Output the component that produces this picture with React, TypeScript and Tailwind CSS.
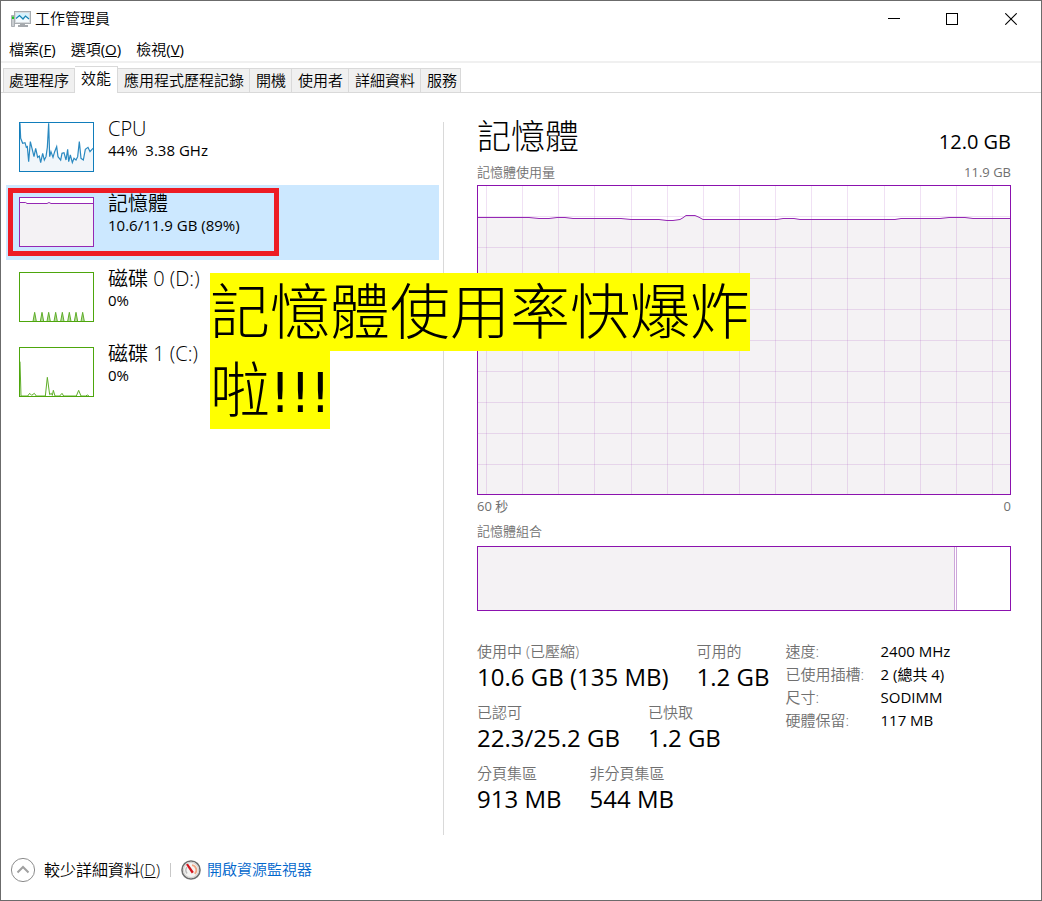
import type { ReactNode } from "react";

const tabs = ["處理程序", "效能", "應用程式歷程記錄", "開機", "使用者", "詳細資料", "服務"];
const activeTab = "效能";

const menus = [
  { label: "檔案", accessKey: "F" },
  { label: "選項", accessKey: "O" },
  { label: "檢視", accessKey: "V" },
];

const columns = [9, 45, 81, 117, 154, 190, 226, 262, 298, 334, 370, 407, 443, 479, 515];
const rows = [31, 62, 93, 124, 155, 186, 217, 248, 279];

const usageCurve =
  "M0 32.5H52L62 33.5H72L80 32.5H88L96 33.5H144L154 34.5H182L190 35.5H196L203 34.5Q206 33 209 30.5H218Q222 32 226 34.5H300L306 33.5H317L323 34.5H418L424 33.5H463L472 32.5H488L496 33.5H534";

const stats = [
  [
    { label: "使用中 (已壓縮)", value: "10.6 GB (135 MB)" },
    { label: "可用的", value: "1.2 GB" },
  ],
  [
    { label: "已認可", value: "22.3/25.2 GB" },
    { label: "已快取", value: "1.2 GB" },
  ],
  [
    { label: "分頁集區", value: "913 MB" },
    { label: "非分頁集區", value: "544 MB" },
  ],
];

const details = [
  ["速度:", "2400 MHz"],
  ["已使用插槽:", "2 (總共 4)"],
  ["尺寸:", "SODIMM"],
  ["硬體保留:", "117 MB"],
];

function MonitorIcon() {
  return (
    <svg width="20" height="18" viewBox="0 0 20 18" aria-hidden="true">
      <path d="M0.5 5.5h3v11h-3z" fill="#c9cdd0" stroke="#9aa0a4" strokeWidth="0.8" />
      <path d="M1 6.5h2v2.5h-2z" fill="#22c522" />
      <path d="M9 13h5v2h3v2H7v-2h2z" fill="#a5a9ad" />
      <rect x="3.5" y="1.5" width="16" height="12" fill="#d9dcdf" stroke="#a7adb1" />
      <rect x="5" y="3" width="13" height="9" fill="#d6f2fc" />
      <path d="M5 8.5L8.5 5.5L12 9L14.5 6L18 9V12H5z" fill="#f4fbfe" />
      <path d="M5 8.5L8.5 5.5L12 9L14.5 6L18 9" fill="none" stroke="#1684b4" strokeWidth="1.2" />
    </svg>
  );
}

function GaugeIcon() {
  return (
    <svg width="20" height="20" viewBox="0 0 20 20" aria-hidden="true">
      <circle cx="10" cy="10" r="9" fill="#f5f4f2" stroke="#6e6e6e" strokeWidth="1.6" />
      <circle cx="10" cy="10" r="7.6" fill="none" stroke="#d4d2d0" strokeWidth="1.2" />
      <path d="M6 13.5A5.2 5.2 0 0 1 6 7.2" fill="none" stroke="#b9b9b9" strokeWidth="1.4" />
      <path d="M11 5.2A5 5 0 0 1 13.8 13.8" fill="none" stroke="#f0a684" strokeWidth="1.8" />
      <path d="M5 4.6L7 3.8L12.8 12L10.8 13.4z" fill="#d4141c" />
    </svg>
  );
}

function Thumbnail({ color, children }: { color: string; children: ReactNode }) {
  return (
    <svg className="h-[50px] w-[75px] shrink-0" viewBox="0 0 225 150" aria-hidden="true">
      <rect width="225" height="150" fill="#fff" />
      {children}
      <rect x="1.5" y="1.5" width="222" height="147" fill="none" stroke={color} strokeWidth="3" />
    </svg>
  );
}

const cpuLine =
  "3,4 5,49 11,64 18,62 22,76 25,74 29,119 34,59 39,79 45,104 50,79 56,106 61,102 65,122 71,94 76,114 81,104 85,76 89,4 92,104 96,89 102,106 107,89 113,74 117,104 125,114 129,94 135,92 141,114 146,82 149,119 154,99 160,122 165,109 171,114 176,104 181,59 186,109 193,114 199,82 207,76 213,89 219,82 223,79";

const diskPeaks = [47, 69, 89, 110, 130, 151, 171, 191];

function CpuThumb() {
  return (
    <Thumbnail color="#117dbb">
      <polygon points={`3,148 ${cpuLine} 223,148`} fill="#f1f6fa" />
      <polyline points={cpuLine} fill="none" stroke="#2a89c0" strokeWidth="3.6" />
    </Thumbnail>
  );
}

function MemoryThumb() {
  return (
    <Thumbnail color="#9528b4">
      <path d="M0 16.5H20L24 19.5H84L90 16.5L96 19.5H225V150H0z" fill="#f4f2f4" />
      <path d="M0 16.5H20L24 19.5H84L90 16.5L96 19.5H225" fill="none" stroke="#9528b4" strokeWidth="3" />
    </Thumbnail>
  );
}

function DiskDThumb() {
  return (
    <Thumbnail color="#4da60c">
      {diskPeaks.map((x) => (
        <path key={x} d={`M${x - 5} 148L${x} 121L${x + 5} 148`} fill="#b5d99c" stroke="#5fae29" strokeWidth="3" />
      ))}
    </Thumbnail>
  );
}

function DiskCThumb() {
  return (
    <Thumbnail color="#4da60c">
      <path
        d="M3 44L6 147H26L32 139L38 145L46 139L52 147H79L85 91L92 143L97 139L100 145L103 130L108 147H122L129 139L134 147H172L179 130L186 147H200L205 144L210 147"
        fill="none"
        stroke="#5fae29"
        strokeWidth="3"
      />
    </Thumbnail>
  );
}

const resources = [
  { name: "CPU", detail: "44%  3.38 GHz", thumb: <CpuThumb />, selected: false },
  { name: "記憶體", detail: "10.6/11.9 GB (89%)", thumb: <MemoryThumb />, selected: true },
  { name: "磁碟 0 (D:)", detail: "0%", thumb: <DiskDThumb />, selected: false },
  { name: "磁碟 1 (C:)", detail: "0%", thumb: <DiskCThumb />, selected: false },
];

function TitleBar() {
  return (
    <header className="flex h-9 items-center justify-between">
      <div className="flex items-center gap-1 pl-[10px]">
        <MonitorIcon />
        <h1 className="pb-[2px] text-[15px] font-[350]">工作管理員</h1>
      </div>
      <div className="flex">
        <button type="button" aria-label="最小化" className="flex h-9 w-[58px] items-center justify-center">
          <svg width="12" height="12" viewBox="0 0 12 12">
            <path d="M0 5.5H12" stroke="#000" />
          </svg>
        </button>
        <button type="button" aria-label="最大化" className="flex h-9 w-[58px] items-center justify-center">
          <svg width="12" height="12" viewBox="0 0 12 12">
            <rect x="0.5" y="0.5" width="11" height="11" fill="none" stroke="#000" />
          </svg>
        </button>
        <button type="button" aria-label="關閉" className="flex h-9 w-[60px] items-center justify-center">
          <svg width="12" height="12" viewBox="0 0 12 12">
            <path d="M0.3 0.3L11.7 11.7M11.7 0.3L0.3 11.7" stroke="#000" strokeWidth="1.1" />
          </svg>
        </button>
      </div>
    </header>
  );
}

function UsageChart() {
  return (
    <svg
      className="block h-[310px] w-full"
      viewBox="0 0 534 310"
      preserveAspectRatio="none"
      role="img"
      aria-label="記憶體使用量"
    >
      <rect width="534" height="310" fill="#fff" />
      <path d={`${usageCurve}V310H0z`} fill="#f4f2f4" />
      <g fill="#9528b4" fillOpacity="0.14">
        {columns.map((x) => (
          <rect key={x} x={x} y="1" width="1" height="308" />
        ))}
        {rows.map((y) => (
          <rect key={y} x="1" y={y} width="532" height="1" />
        ))}
      </g>
      <path d={usageCurve} fill="none" stroke="#9528b4" />
      <rect x="0.5" y="0.5" width="533" height="309" fill="none" stroke="#8b12ae" />
    </svg>
  );
}

export default function App() {
  return (
    <div className="relative flex min-h-screen flex-col border border-[#6b6b6b] bg-white font-['Open_Sans','Noto_Sans_CJK_TC',sans-serif] text-[15px] leading-5 text-black">
      <TitleBar />

      <nav className="flex h-[24px] items-center gap-[15px] pl-2">
        {menus.map((m) => (
          <button key={m.accessKey} type="button" className="leading-5">
            <span className="font-[350]">{m.label}</span>(<span className="underline">{m.accessKey}</span>)
          </button>
        ))}
      </nav>

      <div
        role="tablist"
        className="flex h-8 items-end border-b border-t-2 border-b-[#d9d9d9] border-t-[#f0f0f0] pl-[2px] font-[350]"
      >
        {tabs.map((t) =>
          t === activeTab ? (
            <button
              key={t}
              type="button"
              role="tab"
              aria-selected="true"
              className="-mb-px h-[27px] border border-b-0 border-l-0 border-[#d9d9d9] bg-white px-[6px] pb-1"
            >
              {t}
            </button>
          ) : (
            <button
              key={t}
              type="button"
              role="tab"
              aria-selected="false"
              className="h-6 border-r border-t border-[#d9d9d9] bg-[#f0f0f0] pb-[2px] pl-[6px] pr-[5px] first:border-l first:pl-[5px] last:pr-[3px]"
            >
              {t}
            </button>
          ),
        )}
      </div>

      <main className="flex flex-1 pt-[17px]">
        <div className="w-[438px] shrink-0 pl-[5px]">
          {resources.map((r) => (
            <button
              key={r.name}
              type="button"
              className={
                r.selected
                  ? "relative flex h-[75px] w-full items-start gap-[14px] bg-[#cce8ff] pl-[13px] pt-3 text-left"
                  : "flex h-[75px] w-full items-start gap-[14px] pl-[13px] pt-3 text-left"
              }
            >
              {r.thumb}
              <span className="-mt-1 flex flex-col">
                <span className="text-[20px] font-[350] leading-[22px]">{r.name}</span>
                <span className="whitespace-pre leading-5">{r.detail}</span>
              </span>
              {r.selected && (
                <span className="absolute left-[2px] top-[3px] h-[68px] w-[271px] border-[5px] border-[#ed1c24]" />
              )}
            </button>
          ))}
        </div>

        <section className="ml-1 mt-3 flex-1 border-l border-[#d9d9d9] pl-[33px] pr-[30px]">
          <div className="flex items-end justify-between">
            <h2 className="h-[38px] text-[34px] font-light leading-[28px]">記憶體</h2>
            <span className="mb-[3px] text-[20px] leading-[30px]">12.0 GB</span>
          </div>
          <div className="flex justify-between pb-px text-[13px] leading-6 text-[#707070]">
            <span className="font-[350]">記憶體使用量</span>
            <span>11.9 GB</span>
          </div>
          <UsageChart />
          <div className="flex justify-between text-[13px] leading-[22px] text-[#707070]">
            <span>60 秒</span>
            <span>0</span>
          </div>
          <h3 className="pb-px text-[13px] font-[350] leading-7 text-[#707070]">記憶體組合</h3>
          <div className="flex h-[65px] border border-[#8b12ae]">
            <div className="w-[89.7%] border-r border-[#cda6da] bg-[#f4f2f4]" />
            <div className="ml-px flex-1 border-l border-[#cda6da]" />
          </div>

          <div className="mt-[29px] flex gap-4">
            <div className="flex flex-col gap-[10px]">
              {stats.map((line) => (
                <dl key={line[0].label} className="flex gap-7">
                  {line.map((s) => (
                    <div key={s.label}>
                      <dt className="font-[350] leading-[22px] text-[#707070]">{s.label}</dt>
                      <dd className="whitespace-nowrap text-[24px] leading-[29px]">{s.value}</dd>
                    </div>
                  ))}
                </dl>
              ))}
            </div>
            <dl className="grid auto-rows-[23px] grid-cols-[80px_auto] content-start gap-x-[15px] leading-[22px]">
              {details.map(([k, v]) => (
                <div key={k} className="contents">
                  <dt className="whitespace-nowrap font-[350] text-[#707070]">{k}</dt>
                  <dd className="whitespace-nowrap">{v}</dd>
                </div>
              ))}
            </dl>
          </div>
        </section>
      </main>

      <footer className="mt-[22px] flex items-center pb-[17px] pl-[9px]">
        <button type="button" className="flex items-center gap-2">
          <svg width="26" height="26" viewBox="0 0 26 26" aria-hidden="true">
            <circle cx="13" cy="13" r="11.6" fill="#fff" stroke="#8c8c8c" />
            <path d="M7.5 15.5L13 10L18.5 15.5" fill="none" stroke="#a0a0a0" strokeWidth="2" />
          </svg>
          <span className="text-[16px] font-[350]">
            較少詳細資料(<span className="underline">D</span>)
          </span>
        </button>
        <span className="ml-[10px] h-[14px] w-px bg-[#c8c8c8]" />
        <a href="#resource-monitor" className="ml-[10px] flex items-center gap-[6px] font-[350] text-[#0066cc]">
          <GaugeIcon />
          <span className="pb-[2px]">開啟資源監視器</span>
        </a>
      </footer>

      <p className="absolute left-[209px] top-[272px] font-['Noto_Sans_CJK_TC',sans-serif] text-[60px] font-light leading-[70px]">
        <span className="block h-[78px] w-[540px] bg-[#ffff00]">記憶體使用率快爆炸</span>
        <span className="block h-[78px] w-[120px] bg-[#ffff00]">
          啦<span className="font-['DejaVu_Sans_Condensed','DejaVu_Sans',sans-serif] text-[56px]">!!!</span>
        </span>
      </p>
    </div>
  );
}
